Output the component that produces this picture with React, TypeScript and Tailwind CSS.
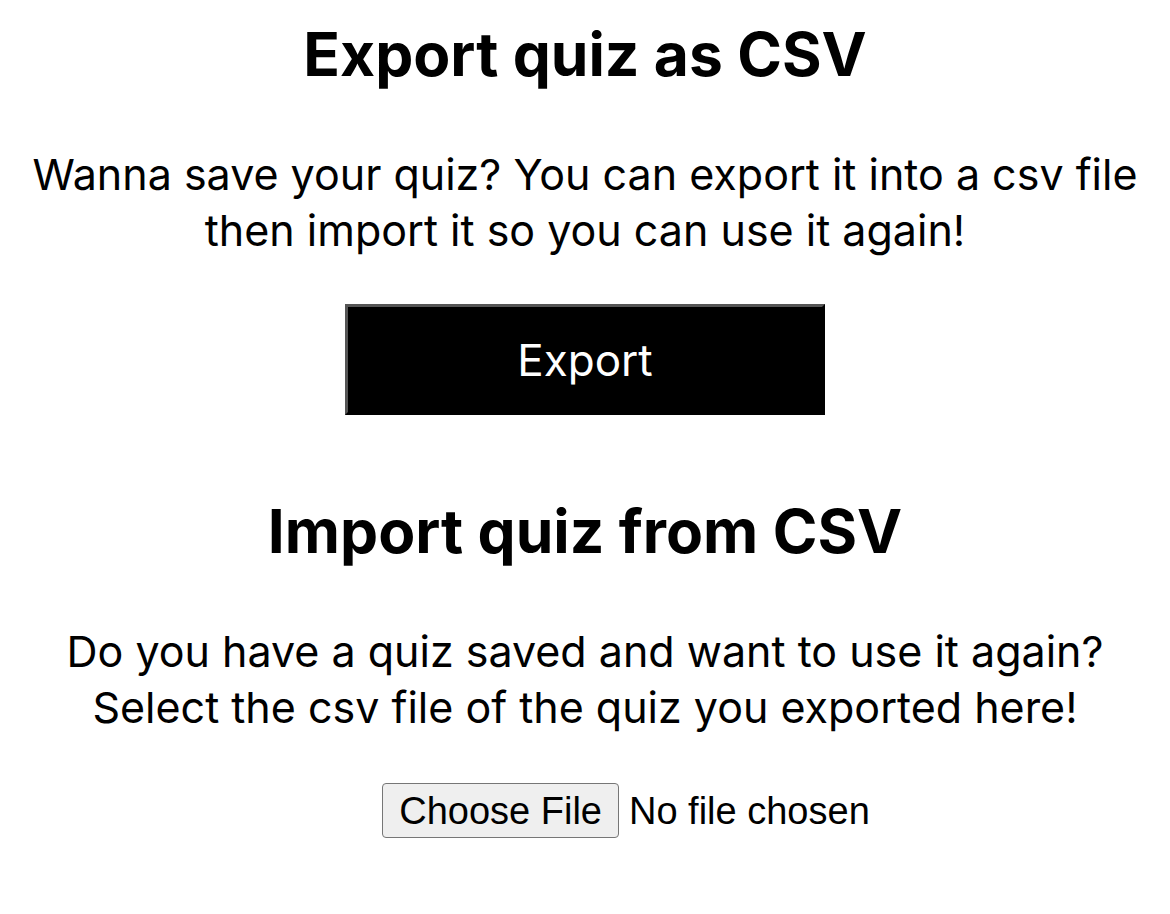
import React from "react";

const ExportSection = () => {
    return (
        <section className="flex flex-col items-center">
            <h1 className="text-[60.5px] font-bold leading-[72px] mt-[18px]">Export quiz as CSV</h1>
            <p className="text-[43px] leading-[56px] mt-[56px] text-center">
                Wanna save your quiz? You can export it into a csv file
                <br />
                then import it so you can use it again!
            </p>
            <button
                className="mt-[46px] w-[480px] h-[111px] bg-black text-white text-[44px] border-[3px] border-t-[#555] border-l-[#555] border-r-black border-b-black"
                onClick={() => console.log("export")}
            >
                Export
            </button>
        </section>
    );
};

const ImportSection = () => {
    return (
        <section className="flex flex-col items-center">
            <h2 className="text-[60.5px] font-bold leading-[72px] mt-[80px]">Import quiz from CSV</h2>
            <p className="text-[43px] leading-[56px] mt-[56px] text-center">
                Do you have a quiz saved and want to use it again?
                <br />
                Select the csv file of the quiz you exported here!
            </p>
            <div className="mt-[48px] flex items-center pl-[82px] font-['Liberation_Sans',Arial,sans-serif] text-[38px]">
                <span className="h-[55px] px-[16px] flex items-center bg-[#efefef] border border-[#767676] rounded-[4px] leading-none">
                    Choose File
                </span>
                <span className="ml-[10px] leading-none">No file chosen</span>
            </div>
        </section>
    );
};

export default function App() {
    return (
        <div className="w-[1170px] h-[914px] bg-white text-black font-['Inter',sans-serif]">
            <ExportSection />
            <ImportSection />
        </div>
    );
}
